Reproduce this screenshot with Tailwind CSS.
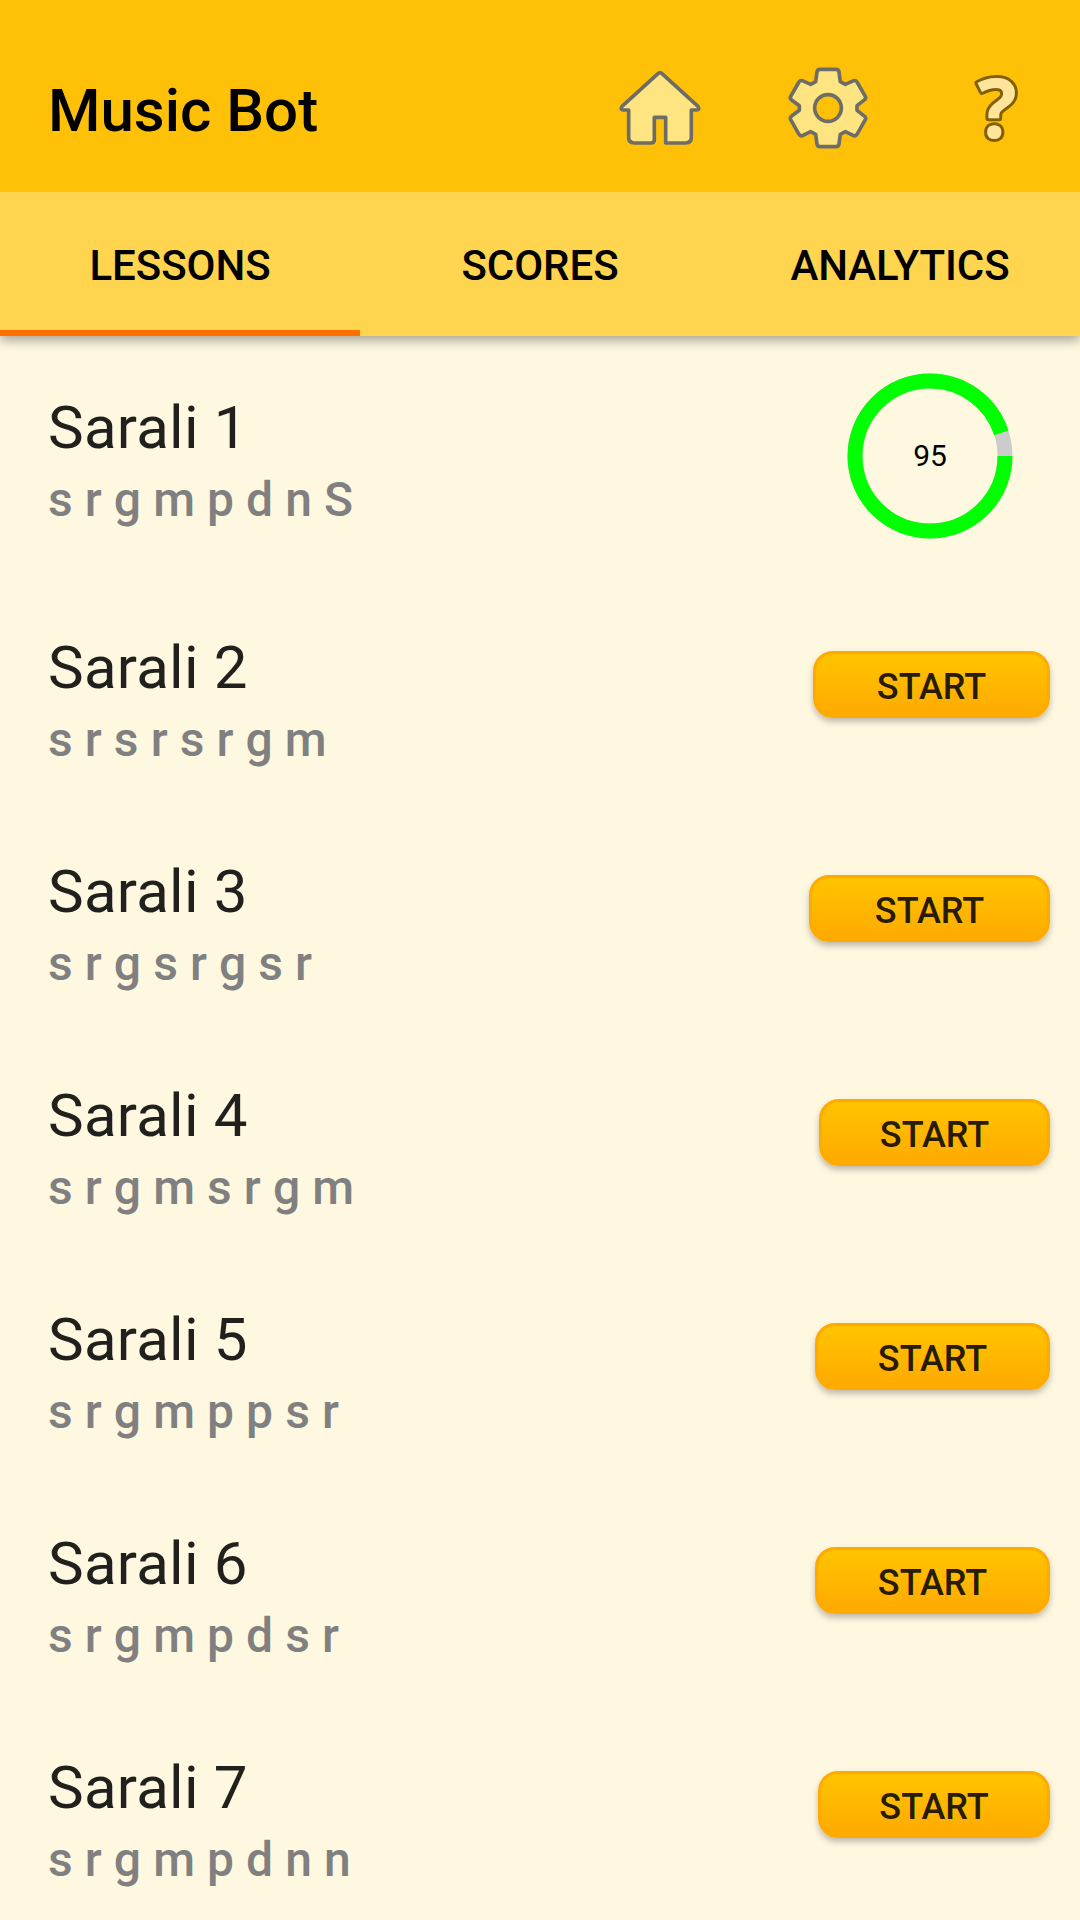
<!DOCTYPE html>
<html lang="en">
<head>
  <meta charset="UTF-8" />
  <meta name="viewport" content="width=device-width, initial-scale=1.0" />
  <title>Music Bot</title>
  <script src="https://cdn.jsdelivr.net/npm/@tailwindcss/browser@4"></script>
</head>
<body class="bg-[#fff8e1] font-['Roboto',sans-serif] w-[1080px] h-[1920px] overflow-hidden">
  <div class="relative z-10 shadow-[0_5px_10px_rgba(0,0,0,0.32)]">
    <header class="h-48 bg-[#ffc107] flex items-start justify-between pl-12 pr-5">
      <h1 class="mt-[76px] text-[60px] leading-[70px] font-medium text-black">Music Bot</h1>
      <nav class="flex gap-[50px] mt-[50px]">
        <a href="#" aria-label="Home">
          <svg class="w-[120px] h-[110px]" viewBox="0 0 360 330" fill="#ffe482" stroke="#6e6c66" stroke-width="11" stroke-linejoin="round">
            <path d="M174 71 Q180 65 186 71 L294 169 Q300 180 290 180 H274 V262 Q274 279 257 279 H197 V202 H163 V270 Q163 279 153 279 H103 Q86 279 86 262 V180 H70 Q60 180 66 169 Z" />
          </svg>
        </a>
        <a href="#" aria-label="Settings">
          <svg class="w-[120px] h-[110px]" viewBox="0 0 360 330" fill="#ffe482" stroke="#6e6c66" stroke-width="11" stroke-linejoin="round">
            <path fill-rule="evenodd" d="M150 58 H198 Q206 58 207 66 L211 95 L226 103 L251 92 Q257 90 261 96 L286 139 Q289 145 284 149 L261 167 V181 L284 199 Q289 203 286 209 L261 253 Q257 259 251 257 L226 245 L211 253 L207 282 Q206 290 198 290 H150 Q142 290 141 282 L137 253 L122 245 L97 257 Q91 259 87 253 L62 209 Q59 203 64 199 L88 181 V167 L64 149 Q59 145 62 139 L87 96 Q91 90 97 92 L122 103 L137 95 L141 66 Q142 58 150 58 Z M174 134 A40 40 0 1 0 174 214 A40 40 0 1 0 174 134 Z" />
          </svg>
        </a>
        <a href="#" aria-label="Help">
          <svg class="w-[120px] h-[110px] overflow-visible" viewBox="0 0 120 110">
            <text x="57" y="87.5" text-anchor="middle" font-size="83" font-weight="700" fill="#ffe59c" stroke="#806000" stroke-width="6" stroke-linejoin="round" paint-order="stroke" class="font-['Open_Sans',sans-serif]">?</text>
          </svg>
        </a>
      </nav>
    </header>

    <div class="grid grid-cols-3 h-36 bg-[#ffd54f] text-[42px] leading-[147px] tracking-[-0.05px] font-medium text-black text-center">
      <a href="#" class="h-36 border-b-6 border-[#ff6f00]">LESSONS</a>
      <a href="#" class="h-36">SCORES</a>
      <a href="#" class="h-36">ANALYTICS</a>
    </div>
  </div>

  <ul>
    <li class="flex items-start justify-between h-[252px] pt-9 pl-12 pr-[66px]">
      <div class="mt-[21px]">
        <h2 class="text-[60px] leading-[70px] tracking-[0.25px] text-black/87">Sarali 1</h2>
        <p class="mt-[9px] text-[48px] leading-[56px] tracking-[0.08px] font-medium text-[#808080]">s r g m p d n S</p>
      </div>
      <!-- score ring, pathLength 100 so the dash is the score -->
      <svg class="w-[168px] h-[168px]" viewBox="0 0 168 168" fill="none" stroke-width="15">
        <circle cx="84" cy="84" r="75" stroke="#cccccc" />
        <circle cx="84" cy="84" r="75" stroke="#00ff00" pathLength="100" stroke-dasharray="95 5" />
        <text x="84" y="94" text-anchor="middle" font-size="30" fill="#000">95</text>
      </svg>
    </li>
  </ul>
  <ul id="lessons"></ul>

  <template id="lesson-row">
    <li class="flex items-start justify-between h-[224px] pt-[45px] pl-12 pr-[30px]">
      <div>
        <h2 class="text-[60px] leading-[70px] tracking-[0.25px] text-black/87"></h2>
        <p class="mt-[9px] text-[48px] leading-[56px] tracking-[0.08px] font-medium text-[#808080]"></p>
      </div>
      <button class="mt-[18px] h-[67px] rounded-[20px] border-3 border-[#ffaa00] bg-linear-to-b from-[#ffc400] to-[#ffaa00] shadow-[0_4px_6px_rgba(0,0,0,0.25)] pt-[5px] text-[36px] leading-9 font-medium text-black/87">START</button>
    </li>
  </template>

  <script>
    const lessons = [
      { name: "Sarali 2", notes: "s r s r s r g m", width: 237 },
      { name: "Sarali 3", notes: "s r g s r g s r", width: 241 },
      { name: "Sarali 4", notes: "s r g m s r g m", width: 231 },
      { name: "Sarali 5", notes: "s r g m p p s r", width: 235 },
      { name: "Sarali 6", notes: "s r g m p d s r", width: 235 },
      { name: "Sarali 7", notes: "s r g m p d n n", width: 232 },
    ];
    const list = document.getElementById("lessons");
    const template = document.getElementById("lesson-row");

    lessons.forEach((lesson) => {
      const row = template.content.cloneNode(true);
      row.querySelector("h2").textContent = lesson.name;
      row.querySelector("p").textContent = lesson.notes;
      row.querySelector("button").style.width = lesson.width + "px";
      list.appendChild(row);
    });
  </script>
</body>
</html>
